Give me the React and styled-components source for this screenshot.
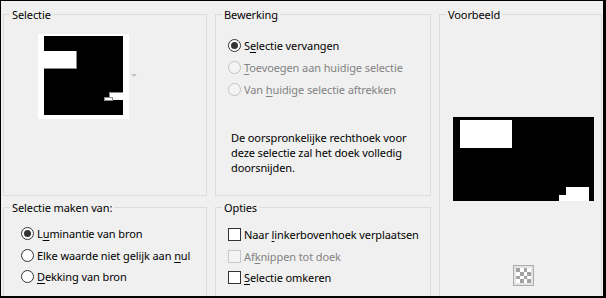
import React from 'react'
import styled, { createGlobalStyle, css } from 'styled-components'

const GlobalStyle = createGlobalStyle`
  html, body {
    margin: 0;
    padding: 0;
    background: #000;
  }
  body {
    font-family: "Noto Sans", "Liberation Sans", sans-serif;
    font-size: 11px;
    letter-spacing: -0.1px;
    color: #000;
  }
`

const Window = styled.div`
  width: 606px;
  height: 298px;
  background: #000;
  padding: 1px 3px 2px 1px;
  box-sizing: border-box;
  overflow: hidden;
`

const Dialog = styled.div`
  height: 100%;
  background: #f0f0f0;
  box-sizing: border-box;
  padding: 13px 0 0 2px;
  display: grid;
  grid-template-columns: 204px 216px 163px;
  grid-template-rows: 182px 90px;
  column-gap: 8px;
  row-gap: 11px;
  overflow: hidden;
`

const Group = styled.div`
  position: relative;
  border: 1px solid #dcdcdc;
  box-sizing: border-box;
  ${p => p.$tall && css`grid-row: 1 / span 2; grid-column: 3;`}
`

const Legend = styled.span`
  position: absolute;
  top: -8px;
  left: 6px;
  padding: 0 2px;
  line-height: 15px;
  background: #f0f0f0;
  white-space: nowrap;
`

const SelectieBody = styled.div`
  display: flex;
  align-items: center;
  padding: 19px 0 0 34px;
`

const Thumb = styled.div`
  background: #fff;
  padding: 2px 6px 4px 6px;
  line-height: 0;
`

const DropArrow = styled.span`
  width: 0;
  height: 0;
  margin-left: 2px;
  margin-top: -2px;
  border-left: 3px solid transparent;
  border-right: 3px solid transparent;
  border-top: 3px solid #c4c4c4;
`

const OptionList = styled.div`
  display: flex;
  flex-direction: column;
  padding: ${p => p.$pad};
`

const Row = styled.label`
  display: flex;
  align-items: center;
  height: ${p => p.$h || 22}px;
  color: ${p => (p.$disabled ? '#838383' : '#000')};
  white-space: nowrap;
`

const RadioMark = styled.span`
  position: relative;
  flex: none;
  width: 13px;
  height: 13px;
  border-radius: 50%;
  box-sizing: border-box;
  margin-right: 3px;
  border: 1px solid ${p => (p.$disabled ? '#c2c2c2' : '#333')};
  background: ${p => (p.$disabled ? '#f4f4f4' : '#fff')};

  ${p => p.$checked && css`
    &::after {
      content: "";
      position: absolute;
      left: 2px;
      top: 2px;
      width: 7px;
      height: 7px;
      border-radius: 50%;
      background: #333;
    }
  `}
`

const CheckMark = styled.span`
  flex: none;
  width: 13px;
  height: 13px;
  box-sizing: border-box;
  margin-right: 3px;
  border: 1px solid ${p => (p.$disabled ? '#c8c8c8' : '#333')};
  background: ${p => (p.$disabled ? '#f4f4f4' : '#fff')};
`

const Key = styled.u`
  text-decoration: underline;
  text-underline-offset: 2px;
`

const Note = styled.p`
  margin: 30px 0 0 3px;
  line-height: 15px;
`

const PreviewBody = styled.div`
  display: flex;
  flex-direction: column;
  align-items: center;
  padding: 102px 0 0 5px;
`

const Checker = styled.svg`
  margin-top: 64px;
`

const Option = ({ type = 'radio', checked, disabled, h, children }) => (
  <Row $disabled={disabled} $h={h}>
    {type === 'radio'
      ? <RadioMark $checked={checked} $disabled={disabled} />
      : <CheckMark $disabled={disabled} />}
    <span>{children}</span>
  </Row>
)

export default function App() {
  return (
    <>
      <GlobalStyle />
      <Window>
        <Dialog>
          <Group>
            <Legend>Selectie</Legend>
            <SelectieBody>
              <Thumb>
                <svg width="79" height="79" viewBox="0 0 79 79" shapeRendering="crispEdges">
                  <rect width="79" height="79" fill="#000" />
                  <rect x="0" y="15" width="33" height="18" fill="#fff" />
                  <path d="M32.5 15V32.5H0" fill="none" stroke="#8a8a8a" />
                  <rect x="65" y="56" width="14" height="8" fill="#fff" />
                  <path d="M65.5 64V56.5H79" fill="none" stroke="#8a8a8a" />
                  <rect x="60.5" y="61.5" width="8" height="2.5" fill="#fff" stroke="#8a8a8a" />
                </svg>
              </Thumb>
              <DropArrow />
            </SelectieBody>
          </Group>

          <Group>
            <Legend>Bewerking</Legend>
            <OptionList $pad="19px 0 0 12px">
              <Option checked>S<Key>e</Key>lectie vervangen</Option>
              <Option disabled><Key>T</Key>oevoegen aan huidige selectie</Option>
              <Option disabled>Van <Key>h</Key>uidige selectie aftrekken</Option>
              <Note>
                De oorspronkelijke rechthoek voor<br />
                deze selectie zal het doek volledig<br />
                doorsnijden.
              </Note>
            </OptionList>
          </Group>

          <Group $tall>
            <Legend>Voorbeeld</Legend>
            <PreviewBody>
              <svg width="141" height="84" viewBox="0 0 141 84" shapeRendering="crispEdges">
                <rect width="141" height="84" fill="#000" />
                <rect x="7" y="3" width="52" height="28" fill="#fff" />
                <rect x="113" y="70" width="23" height="14" fill="#fff" />
                <rect x="106" y="78" width="7" height="6" fill="#fff" />
              </svg>
              <Checker width="21" height="21" viewBox="0 0 21 21" shapeRendering="crispEdges">
                <rect x="0.5" y="0.5" width="20" height="20" fill="#e4e4e4" stroke="#adadad" />
                <rect x="3" y="3" width="15" height="15" fill="#fff" />
                {[0, 1, 2, 3].map(r =>
                  [0, 1, 2, 3].map(c =>
                    (r + c) % 2 === 0 && (
                      <rect key={`${r}-${c}`} x={3 + c * 3.75} y={3 + r * 3.75}
                        width="3.75" height="3.75" fill="#a3a3a3" />
                    )))}
              </Checker>
            </PreviewBody>
          </Group>

          <Group>
            <Legend>Selectie maken van:</Legend>
            <OptionList $pad="15px 0 0 17px">
              <Option checked h={21.5}>L<Key>u</Key>minantie van bron</Option>
              <Option h={21.5}>Elke waarde niet gelijk aan <Key>n</Key>ul</Option>
              <Option h={21.5}><Key>D</Key>ekking van bron</Option>
            </OptionList>
          </Group>

          <Group>
            <Legend>Opties</Legend>
            <OptionList $pad="16px 0 0 12px">
              <Option type="check" h={21.5}>Naar <Key>l</Key>inkerbovenhoek verplaatsen</Option>
              <Option type="check" h={21.5} disabled>Af<Key>k</Key>nippen tot doek</Option>
              <Option type="check" h={21.5}><Key>S</Key>electie omkeren</Option>
            </OptionList>
          </Group>
        </Dialog>
      </Window>
    </>
  )
}
